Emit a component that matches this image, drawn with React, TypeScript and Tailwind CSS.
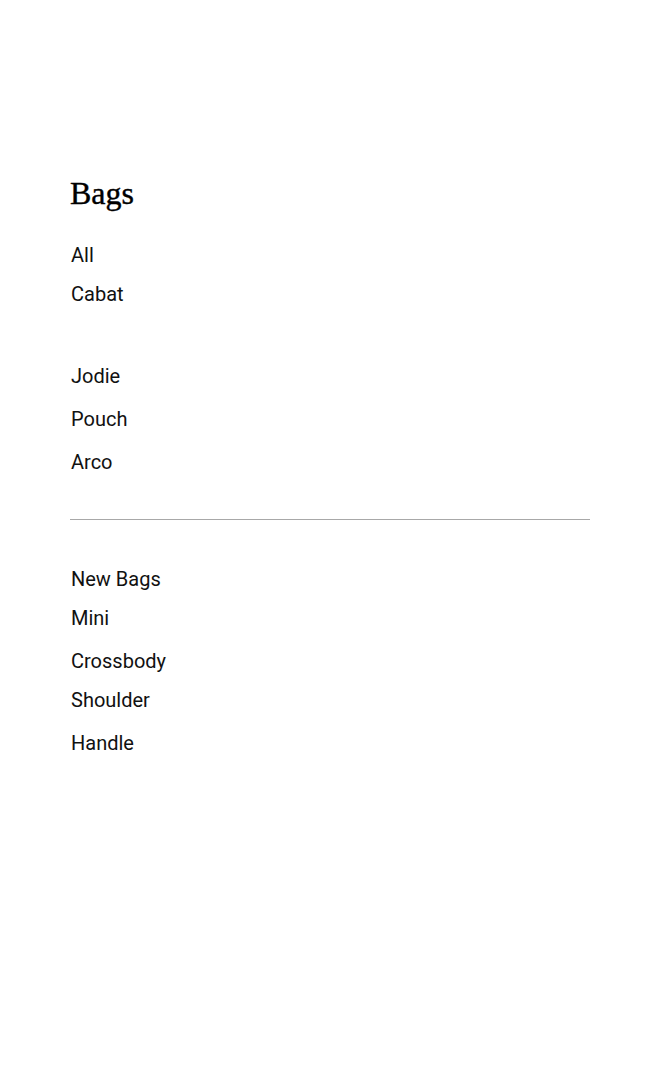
import React from "react";

type Item = { label: string; gap: string };

const top: Item[] = [
  { label: "All", gap: "mt-[32px]" },
  { label: "Cabat", gap: "mt-[15px]" },
  { label: "Jodie", gap: "mt-[58px]" },
  { label: "Pouch", gap: "mt-[19px]" },
  { label: "Arco", gap: "mt-[19px]" },
];

const bottom: Item[] = [
  { label: "New Bags", gap: "mt-[47px]" },
  { label: "Mini", gap: "mt-[15px]" },
  { label: "Crossbody", gap: "mt-[19px]" },
  { label: "Shoulder", gap: "mt-[15px]" },
  { label: "Handle", gap: "mt-[19px]" },
];

const NavLink = ({ item }: { item: Item }) => (
  <a
    href="#"
    className={`${item.gap} block h-[24px] pl-px text-[20px] leading-[24px] text-[#111] font-['Roboto',sans-serif]`}
  >
    {item.label}
  </a>
);

const App = () => {
  return (
    <div className="min-h-screen bg-white">
      <nav className="flex flex-col pt-[175px] pl-[70px] pr-[75px]">
        <h2 className="h-[36px] text-[32px] leading-[36px] text-black font-['Liberation_Serif',serif] [-webkit-text-stroke:0.4px_black]">
          Bags
        </h2>
        {top.map((item) => (
          <NavLink key={item.label} item={item} />
        ))}
        <hr className="mt-[45px] border-0 border-t border-[#a8a8a8]" />
        {bottom.map((item) => (
          <NavLink key={item.label} item={item} />
        ))}
      </nav>
    </div>
  );
};

export default App;
